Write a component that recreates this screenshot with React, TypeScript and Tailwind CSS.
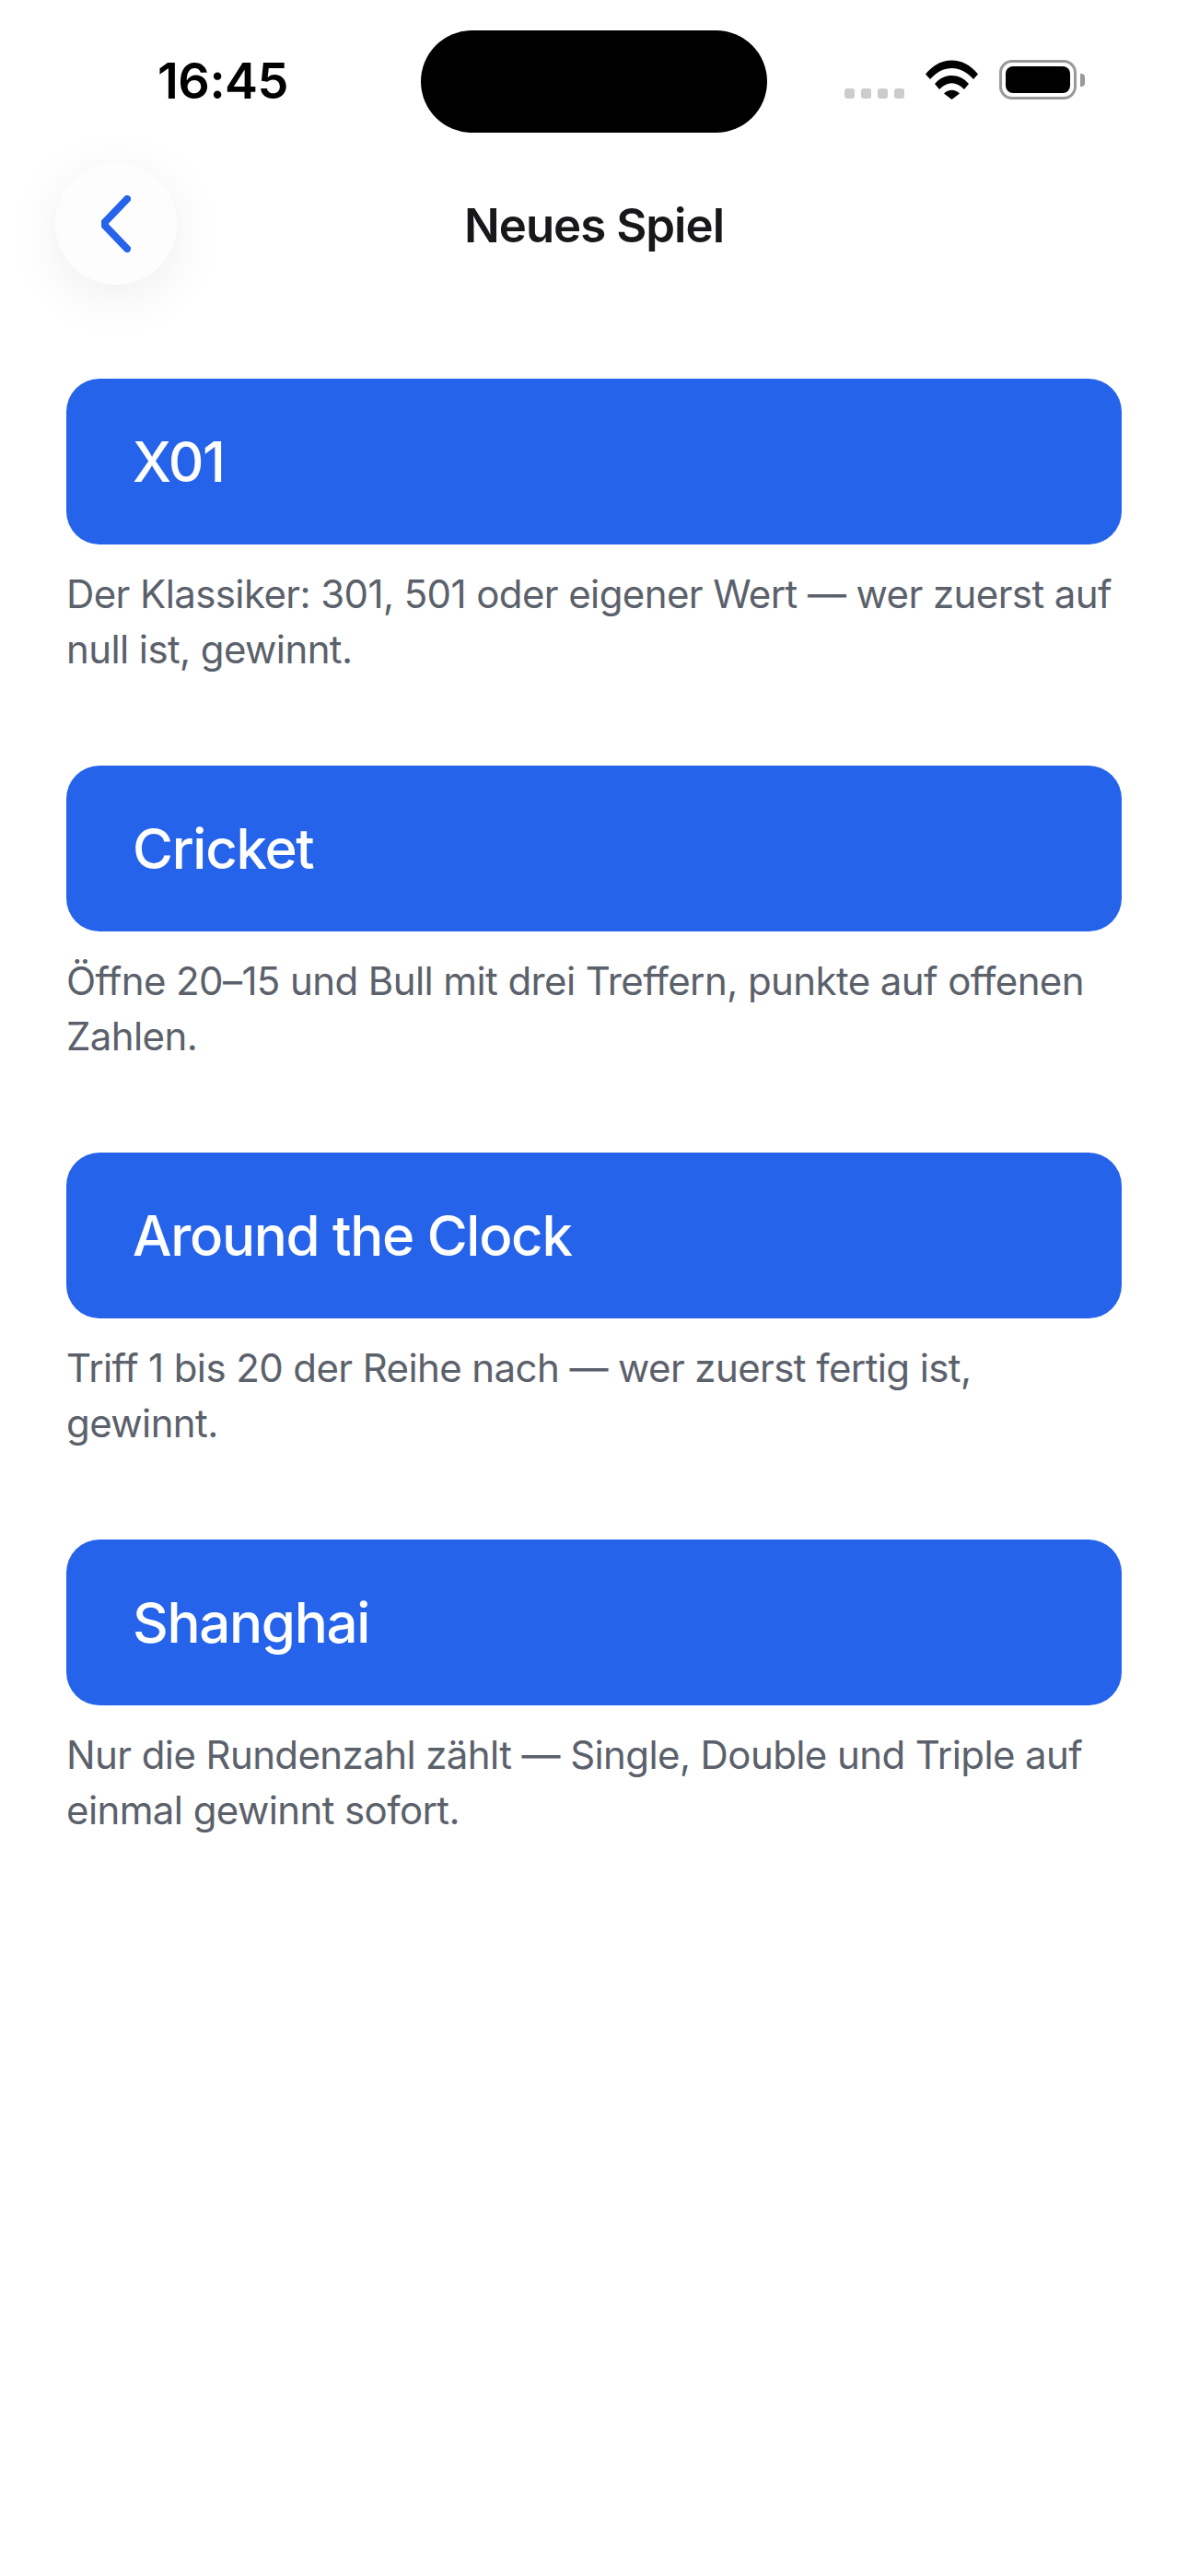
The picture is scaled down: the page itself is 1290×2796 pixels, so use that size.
export default function App() {
  const games = [
    { name: "X01", desc: "Der Klassiker: 301, 501 oder eigener Wert — wer zuerst auf null ist, gewinnt." },
    { name: "Cricket", desc: "Öffne 20–15 und Bull mit drei Treffern, punkte auf offenen Zahlen." },
    { name: "Around the Clock", desc: "Triff 1 bis 20 der Reihe nach — wer zuerst fertig ist, gewinnt." },
    { name: "Shanghai", desc: "Nur die Rundenzahl zählt — Single, Double und Triple auf einmal gewinnt sofort." },
  ];
  return (
    <div className="w-[1290px] h-[2796px] bg-white overflow-hidden font-['Inter',sans-serif]">
      <div className="flex h-[177px] pt-[33px] items-start">
        <div className="w-[457px] pl-[171px] pt-[23px] text-[54px] leading-[64px] font-semibold text-black tracking-[-0.5px]">16:45</div>
        <div className="w-[376px] h-[111px] rounded-full bg-black" />
        <div className="flex items-start pl-[84px] pt-[32px]">
          <div className="flex gap-[7px] mt-[31px]">
            <div className="w-[11px] h-[11px] rounded-[3px] bg-[#cccccc]" />
            <div className="w-[11px] h-[11px] rounded-[3px] bg-[#cccccc]" />
            <div className="w-[11px] h-[11px] rounded-[3px] bg-[#cccccc]" />
            <div className="w-[11px] h-[11px] rounded-[3px] bg-[#cccccc]" />
          </div>
          <svg className="ml-[23px]" width="57" height="43" viewBox="0 0 57 43">
            <path d="M0 15.5 C16 -4.5 41 -4.5 57 15.5 L52 21 C38 5 19 5 5 21 Z" fill="#000" />
            <path d="M10 26 C20 14 37 14 47 26 L42 32 C33 23 24 23 15 32 Z" fill="#000" />
            <path d="M20 36.5 C25 31.5 32 31.5 37 36.5 L28.5 43 Z" fill="#000" />
          </svg>
          <div className="ml-[23px] w-[84px] h-[43px] rounded-[14px] border-[3px] border-[#999999] p-[4px]">
            <div className="w-full h-full rounded-[8px] bg-black" />
          </div>
          <div className="ml-[4px] mt-[15px] w-[5px] h-[14px] rounded-r-[4px] bg-[#999999]" />
        </div>
      </div>

      <div className="grid grid-cols-[192px_1fr_192px] h-[132px] items-center">
        <div className="pl-[60px]">
          <button className="w-[132px] h-[132px] rounded-full bg-[#fdfdfd] shadow-[0_12px_60px_rgba(0,0,0,0.07)] flex items-center justify-center">
            <svg width="32" height="62" viewBox="0 0 32 62" fill="none" stroke="#2563eb" strokeWidth="8" strokeLinecap="round">
              <path d="M28 4 L4 29" />
              <path d="M4 33 L28 58" />
            </svg>
          </button>
        </div>
        <div className="text-center text-[51px] leading-[64px] pt-[3px] font-semibold tracking-[-1px] text-[#18181b]">Neues Spiel</div>
        <div />
      </div>

      <div className="flex flex-col gap-[96px] px-[72px] mt-[102px]">
        {games.map((g) => (
          <div key={g.name}>
            <div className="h-[180px] rounded-[36px] bg-[#2563eb] flex items-center pl-[72px] text-[60px] font-medium tracking-[-1.3px] text-white">
              {g.name}
            </div>
            <p className="mt-[24px] text-[42px] leading-[60px] tracking-[-0.6px] text-[#5b616b]">{g.desc}</p>
          </div>
        ))}
      </div>
    </div>
  );
}
